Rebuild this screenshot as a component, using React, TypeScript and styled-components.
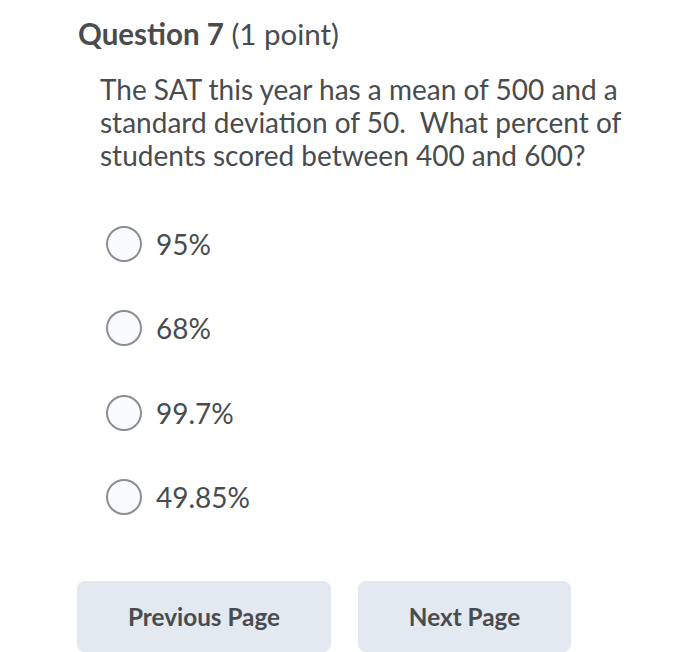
import React, { FC } from "react";
import styled, { createGlobalStyle } from "styled-components";

const GlobalStyle = createGlobalStyle`
  html, body {
    margin: 0;
    padding: 0;
    background: #ffffff;
  }
  body {
    font-family: Lato, "Open Sans", sans-serif;
    color: #494c4e;
  }
`;

const Page = styled.div`
  width: 700px;
  height: 652px;
  box-sizing: border-box;
  padding: 16px 0 0 78px;
  display: flex;
  flex-direction: column;
  overflow: hidden;
`;

const Title = styled.h1`
  margin: 0;
  font-size: 29.5px;
  line-height: 36px;
  font-weight: 400;
  color: #494c4e;
`;

const TitleStrong = styled.span`
  font-weight: 700;
`;

const QuestionText = styled.p`
  margin: 21px 0 0 22px;
  width: 560px;
  font-size: 28px;
  line-height: 33px;
  color: #494c4e;
`;

const OptionList = styled.div`
  display: flex;
  flex-direction: column;
  gap: 44.3px;
  margin: 52px 0 0 28px;
`;

const Option = styled.label`
  display: flex;
  align-items: center;
  gap: 14px;
  height: 40px;
  cursor: pointer;
`;

const Radio = styled.span`
  width: 36px;
  height: 36px;
  border-radius: 50%;
  border: 2px solid #8c8f92;
  background: #f9fbff;
  box-sizing: border-box;
`;

const OptionLabel = styled.span`
  font-size: 28px;
  color: #494c4e;
`;

const ButtonRow = styled.div`
  display: flex;
  gap: 27px;
  margin-top: 64px;
  margin-left: -1px;
`;

const NavButton = styled.button<{ wide?: boolean }>`
  width: ${({ wide }) => (wide ? "254px" : "213px")};
  height: 71px;
  border: none;
  border-radius: 8px;
  background: #e3e9f1;
  font-family: Lato, "Open Sans", sans-serif;
  font-size: 24.3px;
  font-weight: 700;
  color: #494c4e;
  cursor: pointer;
`;

const options = ["95%", "68%", "99.7%", "49.85%"];

const App: FC = () => {
  return (
    <>
      <GlobalStyle />
      <Page>
        <Title>
          <TitleStrong>Question 7</TitleStrong> (1 point)
        </Title>
        <QuestionText>
          The SAT this year has a mean of 500 and a standard deviation of 50.&nbsp; What percent of
          students scored between 400 and 600?
        </QuestionText>
        <OptionList>
          {options.map((opt) => (
            <Option key={opt}>
              <Radio />
              <OptionLabel>{opt}</OptionLabel>
            </Option>
          ))}
        </OptionList>
        <ButtonRow>
          <NavButton wide>Previous Page</NavButton>
          <NavButton>Next Page</NavButton>
        </ButtonRow>
      </Page>
    </>
  );
};

export default App;
